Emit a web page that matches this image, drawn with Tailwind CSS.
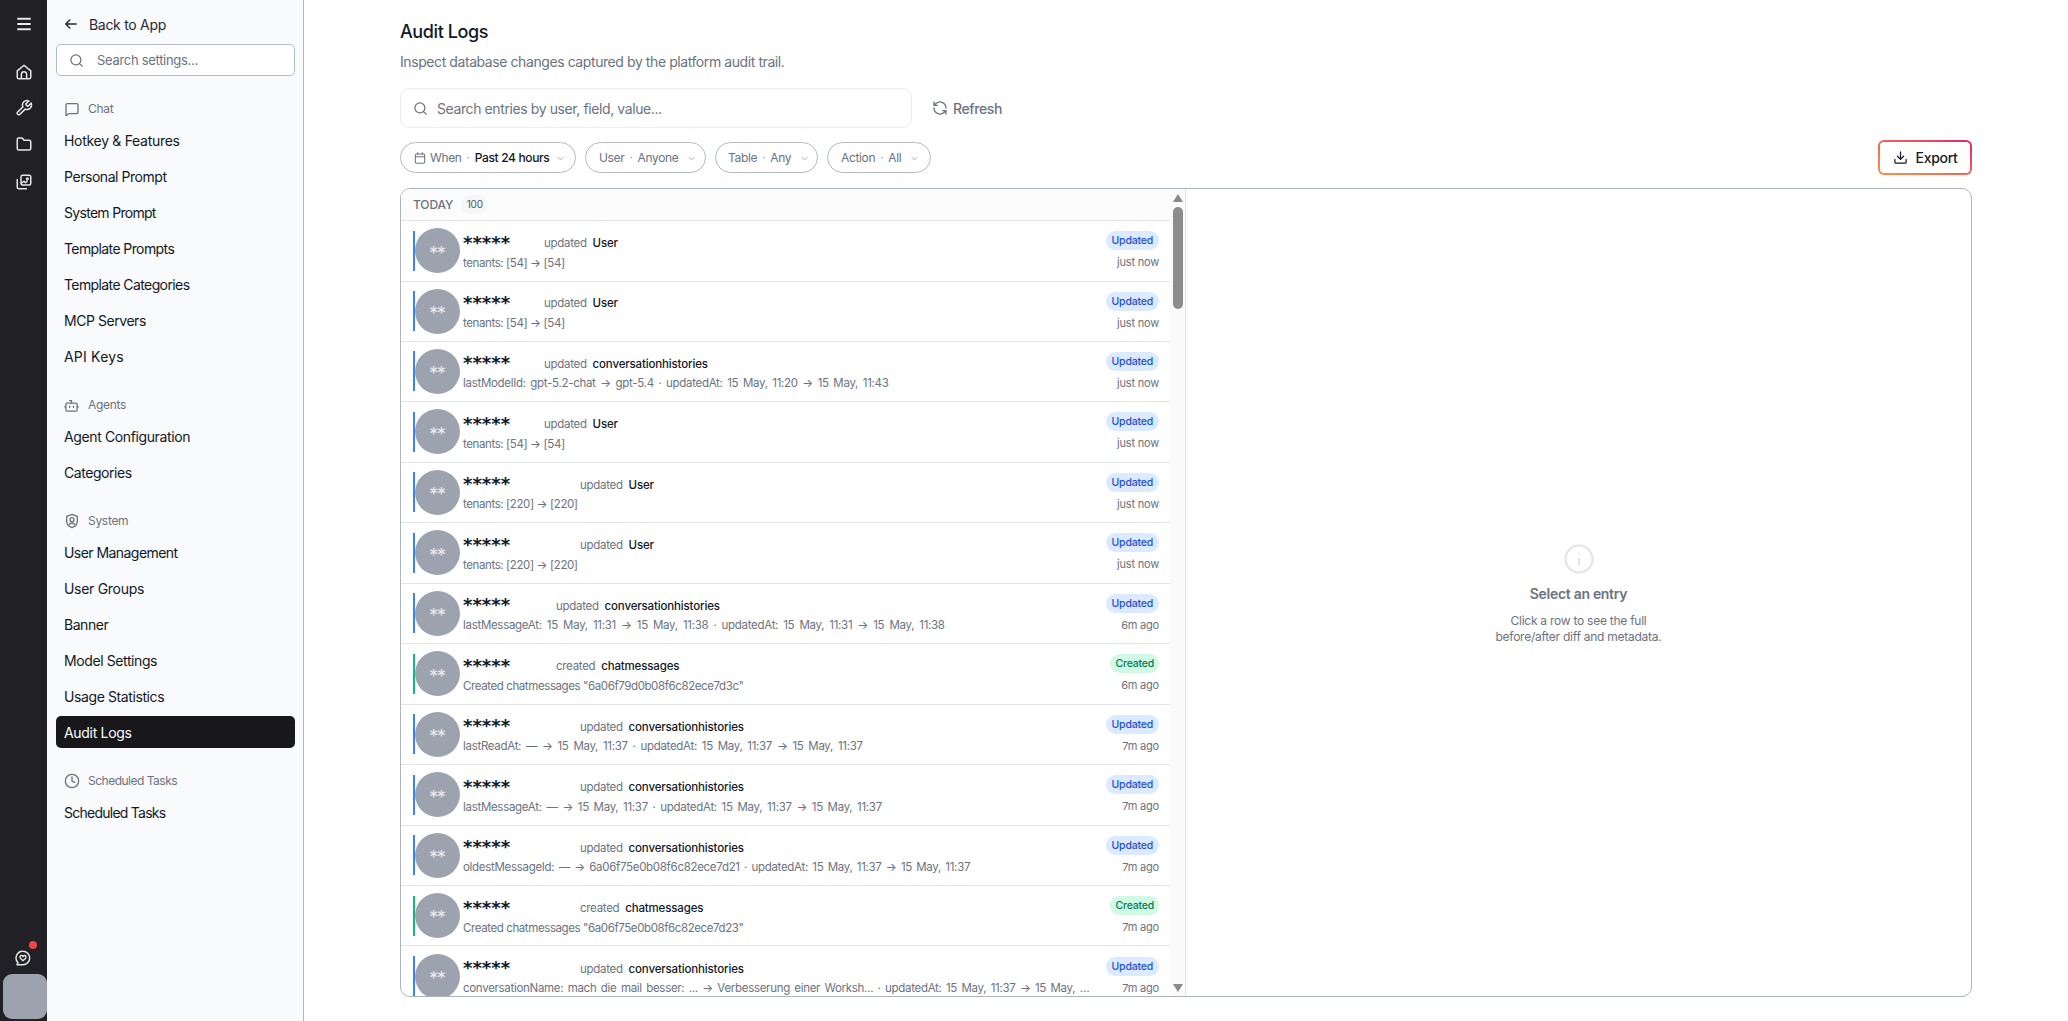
<!DOCTYPE html>
<html lang="en">
<head>
    <meta charset="UTF-8">
    <title>Audit Logs</title>
    <script src="https://cdn.jsdelivr.net/npm/@tailwindcss/browser@4"></script>
</head>
<body class="bg-white font-['Inter','Noto_Sans',sans-serif] text-[#111827]">
<div class="flex h-[1021px] w-[2068px] overflow-hidden">

    <!-- icon rail -->
    <div class="flex w-[47px] shrink-0 flex-col items-center bg-[#202025] pl-[1px] text-[#e5e7eb]">
        <svg class="mt-[15px] h-[18px] w-[18px]" viewBox="0 0 24 24" fill="none" stroke="currentColor" stroke-width="2.6"><path d="M3 5h18M3 12h18M3 19h18"/></svg>
        <svg class="mt-[30px] h-[18px] w-[18px]" viewBox="0 0 24 24" fill="none" stroke="currentColor" stroke-width="2" stroke-linejoin="round"><path d="M3 10.500 12 3l9 7.500V19a2 2 0 0 1-2 2H5a2 2 0 0 1-2-2z"/><path d="M8.500 21v-6a3.500 3.500 0 0 1 7 0v6"/></svg>
        <svg class="mt-[18px] h-[18px] w-[18px]" viewBox="0 0 24 24" fill="none" stroke="currentColor" stroke-width="2" stroke-linejoin="round"><path d="M14.700 6.300a1 1 0 0 0 0 1.400l1.600 1.600a1 1 0 0 0 1.400 0l3.770-3.770a6 6 0 0 1-7.940 7.940l-6.910 6.910a2.120 2.120 0 0 1-3-3l6.910-6.910a6 6 0 0 1 7.940-7.940z"/></svg>
        <svg class="mt-[18px] h-[18px] w-[18px]" viewBox="0 0 24 24" fill="none" stroke="currentColor" stroke-width="2" stroke-linejoin="round"><path d="M3 6a2 2 0 0 1 2-2h4.500l2.500 3h7a2 2 0 0 1 2 2v9a2 2 0 0 1-2 2H5a2 2 0 0 1-2-2z"/></svg>
        <svg class="mt-[20px] h-[18px] w-[18px]" viewBox="0 0 24 24" fill="none" stroke="currentColor" stroke-width="2" stroke-linejoin="round"><rect x="8" y="3" width="13" height="13" rx="2"/><path d="M3 8v11a2 2 0 0 0 2 2h11"/><path d="m8 14 4-3 2 2 3-3"/><circle cx="16.500" cy="7.500" r="1" fill="currentColor"/></svg>
        <div class="relative mb-[8px] mr-[2px] mt-auto">
            <svg class="h-[16px] w-[16px]" viewBox="0 0 24 24" fill="none" stroke="currentColor" stroke-width="2.2" stroke-linejoin="round"><path d="M12 2a10 10 0 0 1 0 20H3l1.500-3A10 10 0 0 1 12 2z"/><path d="M12 16c-3-2-4.500-3.200-4.500-5a2 2 0 0 1 4.500-1 2 2 0 0 1 4.500 1c0 1.800-1.500 3-4.500 5z"/></svg>
            <span class="absolute -right-[6px] -top-[9px] h-[8px] w-[8px] rounded-full bg-[#ef4444]"></span>
        </div>
        <div class="mb-[2px] ml-[2px] h-[45px] w-[44px] rounded-[9px] bg-[#9ca3af]"></div>
    </div>

    <!-- settings sidebar -->
    <div class="flex w-[257px] shrink-0 flex-col border-r border-[#aeb4bc] bg-[#f9fafb] pl-[9px] pr-[8px] text-[14px] tracking-[-0.3px]">
        <div class="flex h-[44px] items-center gap-[11px] pl-[8px] pt-[4px] text-[#1f2937]">
            <svg class="h-[14px] w-[14px]" viewBox="0 0 24 24" fill="none" stroke="currentColor" stroke-width="2.400" stroke-linecap="round" stroke-linejoin="round"><path d="M21 12H3M10 5l-7 7 7 7"/></svg>
            <span>Back to App</span>
        </div>
        <div class="flex h-[32px] items-center gap-[13px] rounded-[5px] border border-[#b4bac2] bg-white pl-[12px] text-[13px] text-[#6b7280]">
            <svg class="h-[15px] w-[15px]" viewBox="0 0 24 24" fill="none" stroke="currentColor" stroke-width="2" stroke-linecap="round"><circle cx="11" cy="11" r="8"/><path d="m21 21-4.300-4.300"/></svg>
            <span class="pt-[2px]">Search settings...</span>
        </div>

        <div class="mt-[22px] flex h-[22px] items-center gap-[8px] pl-[8px] text-[12px] text-[#6b7280]">
            <svg class="h-[16px] w-[16px]" viewBox="0 0 24 24" fill="none" stroke="currentColor" stroke-width="2" stroke-linejoin="round"><path d="M3 6a2 2 0 0 1 2-2h14a2 2 0 0 1 2 2v11a2 2 0 0 1-2 2H7l-4 3z"/></svg>
            <span>Chat</span>
        </div>
        <div class="mt-[2px] flex h-[36px] items-center pl-[8px]">Hotkey &amp; Features</div>
        <div class="flex h-[36px] items-center pl-[8px] tracking-[-0.45px]">Personal Prompt</div>
        <div class="flex h-[36px] items-center pl-[8px] tracking-[-0.7px]">System Prompt</div>
        <div class="flex h-[36px] items-center pl-[8px] tracking-[-0.6px]">Template Prompts</div>
        <div class="flex h-[36px] items-center pl-[8px] tracking-[-0.6px]">Template Categories</div>
        <div class="flex h-[36px] items-center pl-[8px] tracking-[-0.45px]">MCP Servers</div>
        <div class="flex h-[36px] items-center pl-[8px] tracking-[0.2px]">API Keys</div>

        <div class="mt-[20px] flex h-[22px] items-center gap-[9px] pl-[8px] text-[12px] text-[#6b7280]">
            <svg class="h-[15px] w-[15px]" viewBox="0 0 24 24" fill="none" stroke="currentColor" stroke-width="2" stroke-linecap="round" stroke-linejoin="round"><rect x="3" y="8" width="18" height="13" rx="2"/><path d="M12 8V4H9M1 14h2M21 14h2M9 13v2M15 13v2"/></svg>
            <span>Agents</span>
        </div>
        <div class="mt-[2px] flex h-[36px] items-center pl-[8px] tracking-[-0.38px]">Agent Configuration</div>
        <div class="flex h-[36px] items-center pl-[8px] tracking-[-0.45px]">Categories</div>

        <div class="mt-[20px] flex h-[22px] items-center gap-[8px] pl-[8px] text-[12px] text-[#6b7280]">
            <svg class="h-[16px] w-[16px]" viewBox="0 0 24 24" fill="none" stroke="currentColor" stroke-width="2" stroke-linejoin="round"><path d="M12 2l8 3v7c0 5-3.500 8.500-8 10-4.500-1.500-8-5-8-10V5z"/><circle cx="12" cy="10" r="3"/><path d="M7.500 18c1-2 2.500-3 4.500-3s3.500 1 4.500 3"/></svg>
            <span>System</span>
        </div>
        <div class="mt-[2px] flex h-[36px] items-center pl-[8px] tracking-[-0.55px]">User Management</div>
        <div class="flex h-[36px] items-center pl-[8px]">User Groups</div>
        <div class="flex h-[36px] items-center pl-[8px] tracking-[-0.45px]">Banner</div>
        <div class="flex h-[36px] items-center pl-[8px] tracking-[-0.4px]">Model Settings</div>
        <div class="flex h-[36px] items-center pl-[8px] tracking-[-0.4px]">Usage Statistics</div>
        <div class="mt-[2px] flex h-[32px] items-center rounded-[5px] bg-[#18181b] pl-[8px] text-white">Audit Logs</div>

        <div class="mt-[22px] flex h-[22px] items-center gap-[8px] pl-[8px] text-[12px] tracking-[-0.5px] text-[#6b7280]">
            <svg class="h-[16px] w-[16px]" viewBox="0 0 24 24" fill="none" stroke="currentColor" stroke-width="2" stroke-linecap="round"><circle cx="12" cy="12" r="10"/><path d="M12 6v6l4 2"/></svg>
            <span>Scheduled Tasks</span>
        </div>
        <div class="mt-[2px] flex h-[36px] items-center pl-[8px] tracking-[-0.75px]">Scheduled Tasks</div>
    </div>

    <!-- main -->
    <div class="flex min-w-0 flex-1 flex-col pl-[96px] pr-[96px]">
        <h1 class="mt-[21px] h-[22px] text-[18px] font-medium leading-[22px] tracking-[-0.4px] text-[#111827]">Audit Logs</h1>
        <p class="mt-[9px] h-[20px] text-[14px] leading-[20px] tracking-[-0.42px] text-[#6b7280]">Inspect database changes captured by the platform audit trail.</p>

        <div class="mt-[16px] flex h-[40px] items-center">
            <div class="flex h-[40px] w-[512px] items-center gap-[9px] rounded-[8px] border border-[#eceef1] pl-[12px] text-[14px] tracking-[-0.4px] text-[#6b7280]">
                <svg class="h-[15px] w-[15px]" viewBox="0 0 24 24" fill="none" stroke="currentColor" stroke-width="2" stroke-linecap="round"><circle cx="11" cy="11" r="8"/><path d="m21 21-4.300-4.300"/></svg>
                <span>Search entries by user, field, value...</span>
            </div>
            <div class="ml-[20px] flex items-center gap-[5px] text-[14px] font-medium tracking-[-0.4px] text-[#6b7280]">
                <svg class="h-[16px] w-[16px]" viewBox="0 0 24 24" fill="none" stroke="currentColor" stroke-width="2" stroke-linecap="round" stroke-linejoin="round"><path d="M21 12a9 9 0 0 0-15-6.700L3 8M3 3v5h5M3 12a9 9 0 0 0 15 6.700l3-2.700M21 21v-5h-5"/></svg>
                <span>Refresh</span>
            </div>
        </div>

        <div class="mt-[12px] flex h-[35px] items-center gap-[9px] text-[12px] tracking-[-0.35px] text-[#6b7280]">
            <div class="flex h-[31px] w-[176px] items-center gap-[5px] rounded-full border border-[#b4bac2] pl-[12px] pt-[1px]">
                <svg class="-mr-[2px] h-[14px] w-[14px] shrink-0" viewBox="0 0 24 24" fill="none" stroke="currentColor" stroke-width="1.800"><rect x="4" y="5" width="16" height="16" rx="2"/><path d="M8 2v4M16 2v4M4 10h16"/></svg>
                <span>When</span><span class="text-[#9ca3af]">·</span><span class="font-medium text-[#111827]">Past 24 hours</span>
                <svg class="ml-[1px] h-[11px] w-[11px] text-[#9ca3af]" viewBox="0 0 24 24" fill="none" stroke="currentColor" stroke-width="2"><path d="m6 9 6 6 6-6"/></svg>
            </div>
            <div class="flex h-[31px] w-[121px] items-center gap-[5px] rounded-full border border-[#b4bac2] pl-[13px] pt-[1px]">
                <span>User</span><span class="text-[#9ca3af]">·</span><span>Anyone</span>
                <svg class="ml-[3px] h-[11px] w-[11px] text-[#9ca3af]" viewBox="0 0 24 24" fill="none" stroke="currentColor" stroke-width="2"><path d="m6 9 6 6 6-6"/></svg>
            </div>
            <div class="flex h-[31px] w-[103px] items-center gap-[5px] rounded-full border border-[#b4bac2] pl-[12px] pt-[1px]">
                <span>Table</span><span class="text-[#9ca3af]">·</span><span>Any</span>
                <svg class="ml-[3px] h-[11px] w-[11px] text-[#9ca3af]" viewBox="0 0 24 24" fill="none" stroke="currentColor" stroke-width="2"><path d="m6 9 6 6 6-6"/></svg>
            </div>
            <div class="flex h-[31px] w-[104px] items-center gap-[5px] rounded-full border border-[#b4bac2] pl-[13px] pt-[1px]">
                <span>Action</span><span class="text-[#9ca3af]">·</span><span>All</span>
                <svg class="ml-[3px] h-[11px] w-[11px] text-[#9ca3af]" viewBox="0 0 24 24" fill="none" stroke="currentColor" stroke-width="2"><path d="m6 9 6 6 6-6"/></svg>
            </div>
            <div class="ml-auto rounded-[6px] bg-gradient-to-tr from-[#fb923c] to-[#e11d6a] p-[2px]">
                <div class="flex h-[31px] w-[90px] items-center justify-center gap-[8px] rounded-[4px] bg-white text-[14px] font-medium tracking-[-0.3px] text-[#111827]">
                    <svg class="h-[15px] w-[15px]" viewBox="0 0 24 24" fill="none" stroke="currentColor" stroke-width="2" stroke-linecap="round" stroke-linejoin="round"><path d="M12 3v12M7 10l5 5 5-5M3 15v4a2 2 0 0 0 2 2h14a2 2 0 0 0 2-2v-4"/></svg>
                    <span>Export</span>
                </div>
            </div>
        </div>

        <!-- list + detail panel -->
        <div class="mt-[13px] flex h-[809px] overflow-hidden rounded-[10px] border border-[#aeb4bc]">
            <div class="w-[769px] min-w-0 shrink-0 overflow-hidden">
                <div class="flex h-[32px] items-center border-b border-[#e2e4e8] bg-[#fcfcfd] pl-[12px] text-[12px] font-medium tracking-[-0.1px] text-[#6b7280]">
                    TODAY
                    <span class="ml-[8px] flex h-[19px] w-[27px] items-center justify-center rounded-full bg-[#f5f6f8] text-[10px] font-normal text-[#4b5563]">100</span>
                </div>

                <div class="flex h-[60.5px] items-center border-b border-[#e2e4e8] pl-[12px] pr-[11px]">
                    <span class="h-[40px] w-[2px] shrink-0 bg-[#3b82f6]"></span>
                    <span class="flex h-[45px] w-[45px] shrink-0 items-center justify-center rounded-full bg-[#9ca3af] pt-[4px] font-['DejaVu_Sans'] text-[15px] font-bold text-white/75">**</span>
                    <div class="ml-[3px] min-w-0 flex-1 pt-[2px] text-[11.500px] tracking-[-0.3px] text-[#6b7280]">
                        <div class="flex h-[22px] items-center pt-[2px]">
                            <b class="-mt-[2px] w-[81px] shrink-0 font-['DejaVu_Sans'] text-[18px] font-bold leading-[16px] tracking-[0px] text-[#111827]">*****</b>
                            <span>updated&nbsp; <span class="font-medium tracking-[-0.15px] text-[#111827]">User</span></span>
                        </div>
                        <div class="truncate leading-[18px] tracking-[-0.4px]">tenants: [54] → [54]</div>
                    </div>
                    <div class="ml-[13px] flex shrink-0 flex-col items-end gap-[3px] pt-[1px] text-[11px] tracking-[-0.2px]">
                        <span class="rounded-full bg-[#dbeafe] px-[6px] text-[10.500px] font-medium leading-[19px] text-[#1d4ed8]">Updated</span>
                        <span class="leading-[18px] text-[#6b7280]">just now</span>
                    </div>
                </div>

                <div class="flex h-[60px] items-center border-b border-[#e2e4e8] pl-[12px] pr-[11px]">
                    <span class="h-[40px] w-[2px] shrink-0 bg-[#3b82f6]"></span>
                    <span class="flex h-[45px] w-[45px] shrink-0 items-center justify-center rounded-full bg-[#9ca3af] pt-[4px] font-['DejaVu_Sans'] text-[15px] font-bold text-white/75">**</span>
                    <div class="ml-[3px] min-w-0 flex-1 pt-[2px] text-[11.500px] tracking-[-0.3px] text-[#6b7280]">
                        <div class="flex h-[22px] items-center pt-[2px]">
                            <b class="-mt-[2px] w-[81px] shrink-0 font-['DejaVu_Sans'] text-[18px] font-bold leading-[16px] tracking-[0px] text-[#111827]">*****</b>
                            <span>updated&nbsp; <span class="font-medium tracking-[-0.15px] text-[#111827]">User</span></span>
                        </div>
                        <div class="truncate leading-[18px] tracking-[-0.4px]">tenants: [54] → [54]</div>
                    </div>
                    <div class="ml-[13px] flex shrink-0 flex-col items-end gap-[3px] pt-[1px] text-[11px] tracking-[-0.2px]">
                        <span class="rounded-full bg-[#dbeafe] px-[6px] text-[10.500px] font-medium leading-[19px] text-[#1d4ed8]">Updated</span>
                        <span class="leading-[18px] text-[#6b7280]">just now</span>
                    </div>
                </div>

                <div class="flex h-[60.5px] items-center border-b border-[#e2e4e8] pl-[12px] pr-[11px]">
                    <span class="h-[40px] w-[2px] shrink-0 bg-[#3b82f6]"></span>
                    <span class="flex h-[45px] w-[45px] shrink-0 items-center justify-center rounded-full bg-[#9ca3af] pt-[4px] font-['DejaVu_Sans'] text-[15px] font-bold text-white/75">**</span>
                    <div class="ml-[3px] min-w-0 flex-1 pt-[2px] text-[11.500px] tracking-[-0.3px] text-[#6b7280]">
                        <div class="flex h-[22px] items-center pt-[2px]">
                            <b class="-mt-[2px] w-[81px] shrink-0 font-['DejaVu_Sans'] text-[18px] font-bold leading-[16px] tracking-[0px] text-[#111827]">*****</b>
                            <span>updated&nbsp; <span class="font-medium tracking-[-0.15px] text-[#111827]">conversationhistories</span></span>
                        </div>
                        <div class="truncate leading-[18px] [word-spacing:1.700px]">lastModelId: gpt-5.2-chat → gpt-5.4 · updatedAt: 15 May, 11:20 → 15 May, 11:43</div>
                    </div>
                    <div class="ml-[13px] flex shrink-0 flex-col items-end gap-[3px] pt-[1px] text-[11px] tracking-[-0.2px]">
                        <span class="rounded-full bg-[#dbeafe] px-[6px] text-[10.500px] font-medium leading-[19px] text-[#1d4ed8]">Updated</span>
                        <span class="leading-[18px] text-[#6b7280]">just now</span>
                    </div>
                </div>

                <div class="flex h-[60.5px] items-center border-b border-[#e2e4e8] pl-[12px] pr-[11px]">
                    <span class="h-[40px] w-[2px] shrink-0 bg-[#3b82f6]"></span>
                    <span class="flex h-[45px] w-[45px] shrink-0 items-center justify-center rounded-full bg-[#9ca3af] pt-[4px] font-['DejaVu_Sans'] text-[15px] font-bold text-white/75">**</span>
                    <div class="ml-[3px] min-w-0 flex-1 pt-[2px] text-[11.500px] tracking-[-0.3px] text-[#6b7280]">
                        <div class="flex h-[22px] items-center pt-[2px]">
                            <b class="-mt-[2px] w-[81px] shrink-0 font-['DejaVu_Sans'] text-[18px] font-bold leading-[16px] tracking-[0px] text-[#111827]">*****</b>
                            <span>updated&nbsp; <span class="font-medium tracking-[-0.15px] text-[#111827]">User</span></span>
                        </div>
                        <div class="truncate leading-[18px] tracking-[-0.4px]">tenants: [54] → [54]</div>
                    </div>
                    <div class="ml-[13px] flex shrink-0 flex-col items-end gap-[3px] pt-[1px] text-[11px] tracking-[-0.2px]">
                        <span class="rounded-full bg-[#dbeafe] px-[6px] text-[10.500px] font-medium leading-[19px] text-[#1d4ed8]">Updated</span>
                        <span class="leading-[18px] text-[#6b7280]">just now</span>
                    </div>
                </div>

                <div class="flex h-[60.5px] items-center border-b border-[#e2e4e8] pl-[12px] pr-[11px]">
                    <span class="h-[40px] w-[2px] shrink-0 bg-[#3b82f6]"></span>
                    <span class="flex h-[45px] w-[45px] shrink-0 items-center justify-center rounded-full bg-[#9ca3af] pt-[4px] font-['DejaVu_Sans'] text-[15px] font-bold text-white/75">**</span>
                    <div class="ml-[3px] min-w-0 flex-1 pt-[2px] text-[11.500px] tracking-[-0.3px] text-[#6b7280]">
                        <div class="flex h-[22px] items-center pt-[2px]">
                            <b class="-mt-[2px] w-[117px] shrink-0 font-['DejaVu_Sans'] text-[18px] font-bold leading-[16px] tracking-[0px] text-[#111827]">*****</b>
                            <span>updated&nbsp; <span class="font-medium tracking-[-0.15px] text-[#111827]">User</span></span>
                        </div>
                        <div class="truncate leading-[18px] tracking-[-0.4px]">tenants: [220] → [220]</div>
                    </div>
                    <div class="ml-[13px] flex shrink-0 flex-col items-end gap-[3px] pt-[1px] text-[11px] tracking-[-0.2px]">
                        <span class="rounded-full bg-[#dbeafe] px-[6px] text-[10.500px] font-medium leading-[19px] text-[#1d4ed8]">Updated</span>
                        <span class="leading-[18px] text-[#6b7280]">just now</span>
                    </div>
                </div>

                <div class="flex h-[60.5px] items-center border-b border-[#e2e4e8] pl-[12px] pr-[11px]">
                    <span class="h-[40px] w-[2px] shrink-0 bg-[#3b82f6]"></span>
                    <span class="flex h-[45px] w-[45px] shrink-0 items-center justify-center rounded-full bg-[#9ca3af] pt-[4px] font-['DejaVu_Sans'] text-[15px] font-bold text-white/75">**</span>
                    <div class="ml-[3px] min-w-0 flex-1 pt-[2px] text-[11.500px] tracking-[-0.3px] text-[#6b7280]">
                        <div class="flex h-[22px] items-center pt-[2px]">
                            <b class="-mt-[2px] w-[117px] shrink-0 font-['DejaVu_Sans'] text-[18px] font-bold leading-[16px] tracking-[0px] text-[#111827]">*****</b>
                            <span>updated&nbsp; <span class="font-medium tracking-[-0.15px] text-[#111827]">User</span></span>
                        </div>
                        <div class="truncate leading-[18px] tracking-[-0.4px]">tenants: [220] → [220]</div>
                    </div>
                    <div class="ml-[13px] flex shrink-0 flex-col items-end gap-[3px] pt-[1px] text-[11px] tracking-[-0.2px]">
                        <span class="rounded-full bg-[#dbeafe] px-[6px] text-[10.500px] font-medium leading-[19px] text-[#1d4ed8]">Updated</span>
                        <span class="leading-[18px] text-[#6b7280]">just now</span>
                    </div>
                </div>

                <div class="flex h-[60.5px] items-center border-b border-[#e2e4e8] pl-[12px] pr-[11px]">
                    <span class="h-[40px] w-[2px] shrink-0 bg-[#3b82f6]"></span>
                    <span class="flex h-[45px] w-[45px] shrink-0 items-center justify-center rounded-full bg-[#9ca3af] pt-[4px] font-['DejaVu_Sans'] text-[15px] font-bold text-white/75">**</span>
                    <div class="ml-[3px] min-w-0 flex-1 pt-[2px] text-[11.500px] tracking-[-0.3px] text-[#6b7280]">
                        <div class="flex h-[22px] items-center pt-[2px]">
                            <b class="-mt-[2px] w-[93px] shrink-0 font-['DejaVu_Sans'] text-[18px] font-bold leading-[16px] tracking-[0px] text-[#111827]">*****</b>
                            <span>updated&nbsp; <span class="font-medium tracking-[-0.15px] text-[#111827]">conversationhistories</span></span>
                        </div>
                        <div class="truncate leading-[18px] [word-spacing:2.200px]">lastMessageAt: 15 May, 11:31 → 15 May, 11:38 · updatedAt: 15 May, 11:31 → 15 May, 11:38</div>
                    </div>
                    <div class="ml-[13px] flex shrink-0 flex-col items-end gap-[3px] pt-[1px] text-[11px] tracking-[-0.2px]">
                        <span class="rounded-full bg-[#dbeafe] px-[6px] text-[10.500px] font-medium leading-[19px] text-[#1d4ed8]">Updated</span>
                        <span class="leading-[18px] text-[#6b7280]">6m ago</span>
                    </div>
                </div>

                <div class="flex h-[60.5px] items-center border-b border-[#e2e4e8] pl-[12px] pr-[11px]">
                    <span class="h-[40px] w-[2px] shrink-0 bg-[#10b981]"></span>
                    <span class="flex h-[45px] w-[45px] shrink-0 items-center justify-center rounded-full bg-[#9ca3af] pt-[4px] font-['DejaVu_Sans'] text-[15px] font-bold text-white/75">**</span>
                    <div class="ml-[3px] min-w-0 flex-1 pt-[2px] text-[11.500px] tracking-[-0.3px] text-[#6b7280]">
                        <div class="flex h-[22px] items-center pt-[2px]">
                            <b class="-mt-[2px] w-[93px] shrink-0 font-['DejaVu_Sans'] text-[18px] font-bold leading-[16px] tracking-[0px] text-[#111827]">*****</b>
                            <span>created&nbsp; <span class="font-medium tracking-[-0.15px] text-[#111827]">chatmessages</span></span>
                        </div>
                        <div class="truncate leading-[18px] tracking-[-0.4px]">Created chatmessages "6a06f79d0b08f6c82ece7d3c"</div>
                    </div>
                    <div class="ml-[13px] flex shrink-0 flex-col items-end gap-[3px] pt-[1px] text-[11px] tracking-[-0.2px]">
                        <span class="rounded-full bg-[#d1fae5] px-[5px] text-[10.500px] font-medium leading-[19px] text-[#047857]">Created</span>
                        <span class="leading-[18px] text-[#6b7280]">6m ago</span>
                    </div>
                </div>

                <div class="flex h-[60.5px] items-center border-b border-[#e2e4e8] pl-[12px] pr-[11px]">
                    <span class="h-[40px] w-[2px] shrink-0 bg-[#3b82f6]"></span>
                    <span class="flex h-[45px] w-[45px] shrink-0 items-center justify-center rounded-full bg-[#9ca3af] pt-[4px] font-['DejaVu_Sans'] text-[15px] font-bold text-white/75">**</span>
                    <div class="ml-[3px] min-w-0 flex-1 pt-[2px] text-[11.500px] tracking-[-0.3px] text-[#6b7280]">
                        <div class="flex h-[22px] items-center pt-[2px]">
                            <b class="-mt-[2px] w-[117px] shrink-0 font-['DejaVu_Sans'] text-[18px] font-bold leading-[16px] tracking-[0px] text-[#111827]">*****</b>
                            <span>updated&nbsp; <span class="font-medium tracking-[-0.15px] text-[#111827]">conversationhistories</span></span>
                        </div>
                        <div class="truncate leading-[18px] [word-spacing:1.900px]">lastReadAt: — → 15 May, 11:37 · updatedAt: 15 May, 11:37 → 15 May, 11:37</div>
                    </div>
                    <div class="ml-[13px] flex shrink-0 flex-col items-end gap-[3px] pt-[1px] text-[11px] tracking-[-0.2px]">
                        <span class="rounded-full bg-[#dbeafe] px-[6px] text-[10.500px] font-medium leading-[19px] text-[#1d4ed8]">Updated</span>
                        <span class="leading-[18px] text-[#6b7280]">7m ago</span>
                    </div>
                </div>

                <div class="flex h-[60.5px] items-center border-b border-[#e2e4e8] pl-[12px] pr-[11px]">
                    <span class="h-[40px] w-[2px] shrink-0 bg-[#3b82f6]"></span>
                    <span class="flex h-[45px] w-[45px] shrink-0 items-center justify-center rounded-full bg-[#9ca3af] pt-[4px] font-['DejaVu_Sans'] text-[15px] font-bold text-white/75">**</span>
                    <div class="ml-[3px] min-w-0 flex-1 pt-[2px] text-[11.500px] tracking-[-0.3px] text-[#6b7280]">
                        <div class="flex h-[22px] items-center pt-[2px]">
                            <b class="-mt-[2px] w-[117px] shrink-0 font-['DejaVu_Sans'] text-[18px] font-bold leading-[16px] tracking-[0px] text-[#111827]">*****</b>
                            <span>updated&nbsp; <span class="font-medium tracking-[-0.15px] text-[#111827]">conversationhistories</span></span>
                        </div>
                        <div class="truncate leading-[18px] [word-spacing:1.800px]">lastMessageAt: — → 15 May, 11:37 · updatedAt: 15 May, 11:37 → 15 May, 11:37</div>
                    </div>
                    <div class="ml-[13px] flex shrink-0 flex-col items-end gap-[3px] pt-[1px] text-[11px] tracking-[-0.2px]">
                        <span class="rounded-full bg-[#dbeafe] px-[6px] text-[10.500px] font-medium leading-[19px] text-[#1d4ed8]">Updated</span>
                        <span class="leading-[18px] text-[#6b7280]">7m ago</span>
                    </div>
                </div>

                <div class="flex h-[60.5px] items-center border-b border-[#e2e4e8] pl-[12px] pr-[11px]">
                    <span class="h-[40px] w-[2px] shrink-0 bg-[#3b82f6]"></span>
                    <span class="flex h-[45px] w-[45px] shrink-0 items-center justify-center rounded-full bg-[#9ca3af] pt-[4px] font-['DejaVu_Sans'] text-[15px] font-bold text-white/75">**</span>
                    <div class="ml-[3px] min-w-0 flex-1 pt-[2px] text-[11.500px] tracking-[-0.3px] text-[#6b7280]">
                        <div class="flex h-[22px] items-center pt-[2px]">
                            <b class="-mt-[2px] w-[117px] shrink-0 font-['DejaVu_Sans'] text-[18px] font-bold leading-[16px] tracking-[0px] text-[#111827]">*****</b>
                            <span>updated&nbsp; <span class="font-medium tracking-[-0.15px] text-[#111827]">conversationhistories</span></span>
                        </div>
                        <div class="truncate leading-[18px] [word-spacing:1.400px]">oldestMessageId: — → 6a06f75e0b08f6c82ece7d21 · updatedAt: 15 May, 11:37 → 15 May, 11:37</div>
                    </div>
                    <div class="ml-[13px] flex shrink-0 flex-col items-end gap-[3px] pt-[1px] text-[11px] tracking-[-0.2px]">
                        <span class="rounded-full bg-[#dbeafe] px-[6px] text-[10.500px] font-medium leading-[19px] text-[#1d4ed8]">Updated</span>
                        <span class="leading-[18px] text-[#6b7280]">7m ago</span>
                    </div>
                </div>

                <div class="flex h-[60px] items-center border-b border-[#e2e4e8] pl-[12px] pr-[11px]">
                    <span class="h-[40px] w-[2px] shrink-0 bg-[#10b981]"></span>
                    <span class="flex h-[45px] w-[45px] shrink-0 items-center justify-center rounded-full bg-[#9ca3af] pt-[4px] font-['DejaVu_Sans'] text-[15px] font-bold text-white/75">**</span>
                    <div class="ml-[3px] min-w-0 flex-1 pt-[2px] text-[11.500px] tracking-[-0.3px] text-[#6b7280]">
                        <div class="flex h-[22px] items-center pt-[2px]">
                            <b class="-mt-[2px] w-[117px] shrink-0 font-['DejaVu_Sans'] text-[18px] font-bold leading-[16px] tracking-[0px] text-[#111827]">*****</b>
                            <span>created&nbsp; <span class="font-medium tracking-[-0.15px] text-[#111827]">chatmessages</span></span>
                        </div>
                        <div class="truncate leading-[18px] tracking-[-0.4px]">Created chatmessages "6a06f75e0b08f6c82ece7d23"</div>
                    </div>
                    <div class="ml-[13px] flex shrink-0 flex-col items-end gap-[3px] pt-[1px] text-[11px] tracking-[-0.2px]">
                        <span class="rounded-full bg-[#d1fae5] px-[5px] text-[10.500px] font-medium leading-[19px] text-[#047857]">Created</span>
                        <span class="leading-[18px] text-[#6b7280]">7m ago</span>
                    </div>
                </div>

                <div class="flex h-[60.5px] items-center pl-[12px] pr-[11px]">
                    <span class="h-[40px] w-[2px] shrink-0 bg-[#3b82f6]"></span>
                    <span class="flex h-[45px] w-[45px] shrink-0 items-center justify-center rounded-full bg-[#9ca3af] pt-[4px] font-['DejaVu_Sans'] text-[15px] font-bold text-white/75">**</span>
                    <div class="ml-[3px] min-w-0 flex-1 pt-[2px] text-[11.500px] tracking-[-0.3px] text-[#6b7280]">
                        <div class="flex h-[22px] items-center pt-[2px]">
                            <b class="-mt-[2px] w-[117px] shrink-0 font-['DejaVu_Sans'] text-[18px] font-bold leading-[16px] tracking-[0px] text-[#111827]">*****</b>
                            <span>updated&nbsp; <span class="font-medium tracking-[-0.15px] text-[#111827]">conversationhistories</span></span>
                        </div>
                        <div class="truncate leading-[18px] [word-spacing:1.500px]">conversationName: mach die mail besser: ... → Verbesserung einer Worksh... · updatedAt: 15 May, 11:37 → 15 May, 11:37</div>
                    </div>
                    <div class="ml-[13px] flex shrink-0 flex-col items-end gap-[3px] pt-[1px] text-[11px] tracking-[-0.2px]">
                        <span class="rounded-full bg-[#dbeafe] px-[6px] text-[10.500px] font-medium leading-[19px] text-[#1d4ed8]">Updated</span>
                        <span class="leading-[18px] text-[#6b7280]">7m ago</span>
                    </div>
                </div>
            </div>

            <!-- list scrollbar -->
            <div class="flex w-[15px] shrink-0 flex-col items-center bg-[#fafafa]">
                <svg class="mt-[5px] h-[8px] w-[10px] shrink-0" viewBox="0 0 10 8" fill="#8a8a8a"><polygon points="5,0 10,8 0,8"/></svg>
                <div class="mt-[5px] h-[102px] w-[10px] rounded-full bg-[#8c8c8c]"></div>
                <svg class="mb-[4px] mt-auto h-[8px] w-[10px] shrink-0" viewBox="0 0 10 8" fill="#8a8a8a"><polygon points="0,0 10,0 5,8"/></svg>
            </div>

            <!-- detail panel -->
            <div class="flex min-w-0 flex-1 flex-col items-center justify-center border-l border-[#e2e4e8] pt-[3px]">
                <svg class="h-[30px] w-[30px] text-[#e3e4e6]" viewBox="0 0 30 30" fill="none" stroke="currentColor" stroke-width="2.200"><circle cx="15" cy="15" r="13.500"/><path d="M15 14v7M15 9v1.500"/></svg>
                <div class="mt-[10px] text-[14px] font-semibold leading-[20px] tracking-[-0.3px] text-[#6b7280]">Select an entry</div>
                <div class="mt-[9px] text-center text-[12px] leading-[16px] tracking-[-0.25px] text-[#6b7280]">Click a row to see the full<br>before/after diff and metadata.</div>
            </div>
        </div>
    </div>
</div>
</body>
</html>
